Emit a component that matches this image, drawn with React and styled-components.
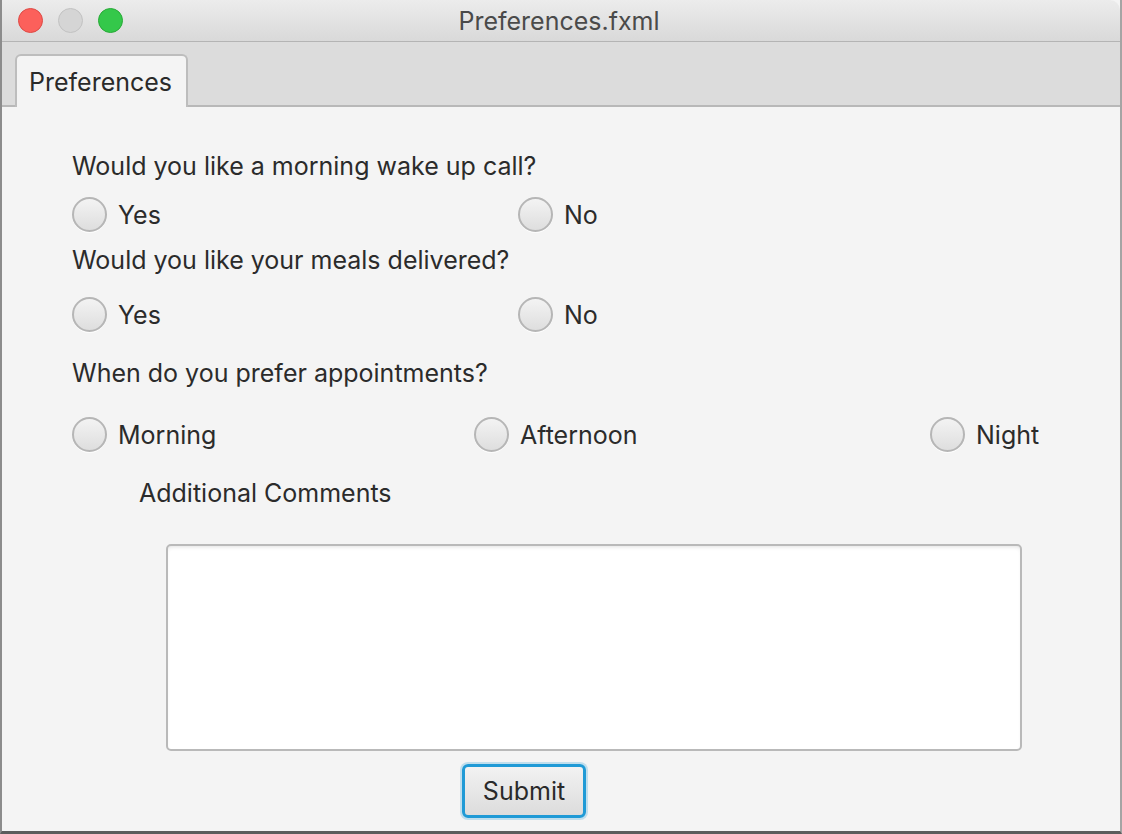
import styled, { createGlobalStyle } from 'styled-components'

const GlobalStyle = createGlobalStyle`
  html, body { margin: 0; padding: 0; }
  body { background: #f4f4f4; font-family: Inter, "Open Sans", "Liberation Sans", sans-serif; }
  * { box-sizing: border-box; }
`

const Window = styled.div`
  width: 1122px;
  height: 834px;
  display: flex;
  flex-direction: column;
  background: #f4f4f4;
  border-left: 2px solid #8c8c8c;
  border-right: 2px solid #a4a4a4;
  border-bottom: 3px solid #5c5c5c;
  overflow: hidden;
`

const TitleBar = styled.div`
  height: 42px;
  flex: none;
  display: flex;
  align-items: center;
  position: relative;
  background: linear-gradient(#ececec, #d9d9d9);
  border-bottom: 1px solid #b4b4b4;
  border-top-right-radius: 10px;
`

const Lights = styled.div`
  display: flex;
  gap: 15px;
  padding-left: 16px;
`

const Light = styled.span`
  width: 25px;
  height: 25px;
  border-radius: 50%;
  background: ${p => p.$color};
  border: 1px solid ${p => p.$edge};
`

const Title = styled.div`
  position: absolute;
  left: 0;
  right: 4px;
  text-align: center;
  font-size: 25px;
  color: #4a4a4a;
  pointer-events: none;
`

const TabBar = styled.div`
  height: 65px;
  flex: none;
  display: flex;
  align-items: flex-end;
  padding-left: 13px;
  background: #dcdcdc;
  border-bottom: 2px solid #b8b8b8;
`

const Tab = styled.div`
  height: 53px;
  margin-bottom: -2px;
  padding: 0 14px 0 12px;
  display: flex;
  align-items: center;
  font-size: 25px;
  color: #2a2a2a;
  background: #f4f4f4;
  border: 2px solid #bdbdbd;
  border-bottom: none;
  border-radius: 6px 6px 0 0;
`

const Content = styled.div`
  flex: 1;
  display: flex;
  flex-direction: column;
  align-items: flex-start;
  padding: 44px 0 0 70px;
  color: #2b2b2b;
  font-size: 25px;
`

const Question = styled.div`
  line-height: 30px;
  margin-top: ${p => p.$top || 0}px;
  margin-left: ${p => p.$left || 0}px;
`

const RadioRow = styled.div`
  display: grid;
  grid-template-columns: ${p => p.$cols};
  align-items: center;
  margin-top: ${p => p.$top}px;
`

const Option = styled.label`
  display: flex;
  align-items: center;
  gap: 11px;
  line-height: 34px;
`

const Radio = styled.input.attrs({ type: 'radio' })`
  appearance: none;
  margin: 0;
  width: 35px;
  height: 35px;
  border-radius: 50%;
  border: 2px solid #b6b6b6;
  background: linear-gradient(#f3f3f3, #dedede);
  box-shadow: 0 1px 0 rgba(255, 255, 255, 0.8);
`

const Comments = styled.textarea`
  width: 856px;
  height: 207px;
  margin: 36px 0 0 94px;
  resize: none;
  background: #fff;
  border: 2px solid #b9b9b9;
  border-radius: 5px;
  box-shadow: inset 0 3px 4px -2px rgba(0, 0, 0, 0.12);
  outline: none;
`

const SubmitButton = styled.button`
  width: 124px;
  height: 54px;
  margin: 13px 0 0 390px;
  font-family: inherit;
  font-size: 25px;
  color: #2a2a2a;
  background: linear-gradient(#f2f2f2, #dcdcdc);
  border: 3px solid #1f9ad6;
  border-radius: 6px;
  box-shadow: 0 0 0 2px rgba(31, 154, 214, 0.25);
`

const options = (name, labels) =>
  labels.map(label => (
    <Option key={label}>
      <Radio name={name} />
      {label}
    </Option>
  ))

const App = () => {
  return (
    <Window>
      <GlobalStyle />
      <TitleBar>
        <Lights>
          <Light $color="#fc605b" $edge="#de4a45" />
          <Light $color="#d5d5d5" $edge="#c2c2c2" />
          <Light $color="#34c84a" $edge="#27aa36" />
        </Lights>
        <Title>Preferences.fxml</Title>
      </TitleBar>
      <TabBar>
        <Tab>Preferences</Tab>
      </TabBar>
      <Content>
        <Question>Would you like a morning wake up call?</Question>
        <RadioRow $cols="446px auto" $top={16}>
          {options('wake', ['Yes', 'No'])}
        </RadioRow>
        <Question $top={13}>Would you like your meals delivered?</Question>
        <RadioRow $cols="446px auto" $top={22}>
          {options('meals', ['Yes', 'No'])}
        </RadioRow>
        <Question $top={26}>When do you prefer appointments?</Question>
        <RadioRow $cols="402px 456px auto" $top={29}>
          {options('time', ['Morning', 'Afternoon', 'Night'])}
        </RadioRow>
        <Question $top={26} $left={67}>Additional Comments</Question>
        <Comments />
        <SubmitButton>Submit</SubmitButton>
      </Content>
    </Window>
  )
}

export default App
